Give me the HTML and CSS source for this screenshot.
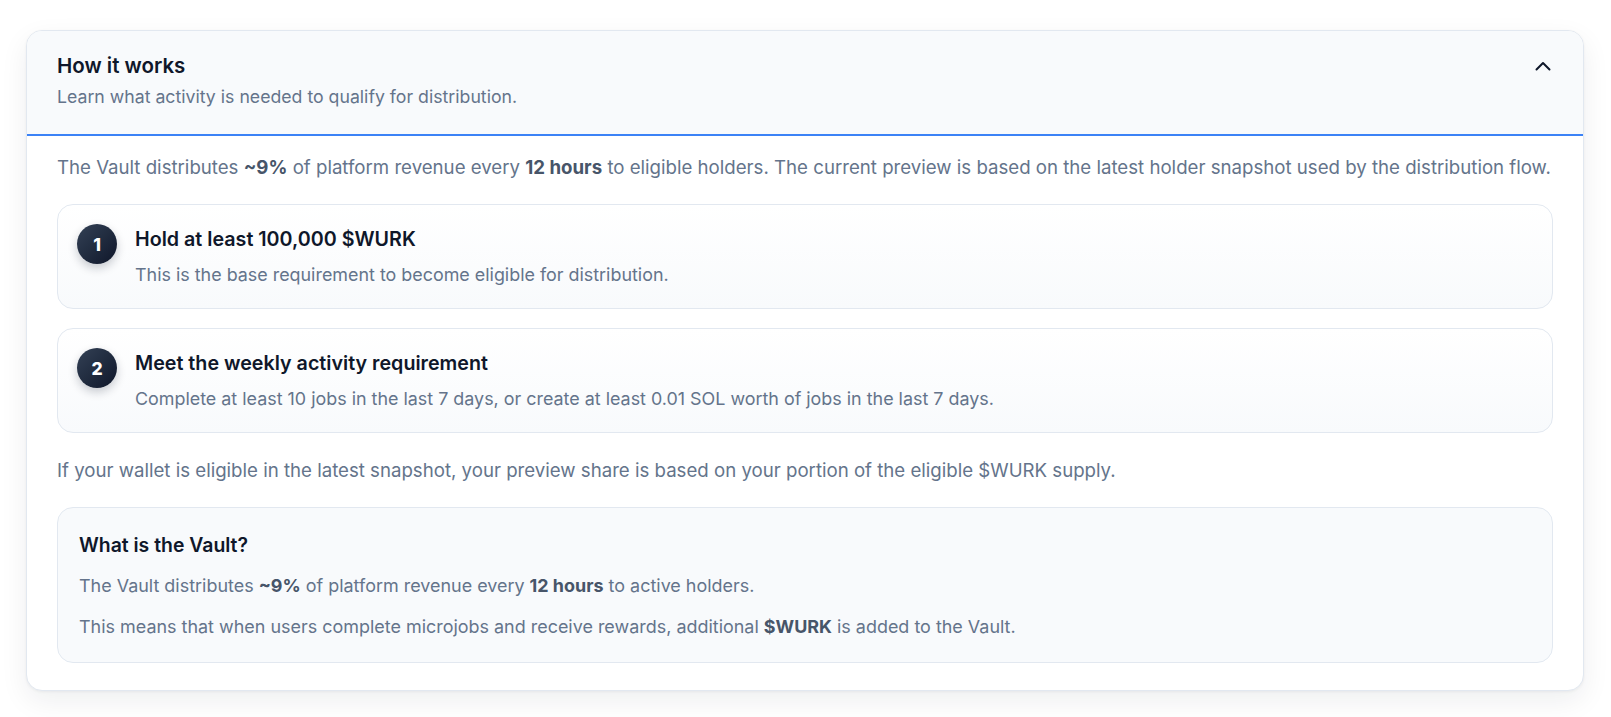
FILE: index.html
```html
<!DOCTYPE html>
<html lang="en">
<head>
  <meta charset="UTF-8" />
  <meta name="viewport" content="width=device-width, initial-scale=1.0" />
  <title>How it works - Vault</title>
  <link rel="stylesheet" href="styles.css">
</head>
<body>
  <section class="panel">
    <div class="panel-head">
      <div>
        <h2>How it works</h2>
        <p>Learn what activity is needed to qualify for distribution.</p>
      </div>
      <button class="toggle" aria-label="Collapse">
        <svg width="16" height="16" viewBox="0 0 16 16" fill="none" stroke="#0f172a" stroke-width="2" stroke-linecap="round" stroke-linejoin="round"><path d="M1.5 11.5 8 5l6.5 6.5"/></svg>
      </button>
    </div>

    <div class="panel-body">
      <p class="lead">The Vault distributes <b>~9%</b> of platform revenue every <b>12 hours</b> to eligible holders. The current preview is based on the latest holder snapshot used by the distribution flow.</p>

      <div class="steps">
        <div class="step">
          <span class="num">1</span>
          <div>
            <h3>Hold at least 100,000 $WURK</h3>
            <p>This is the base requirement to become eligible for distribution.</p>
          </div>
        </div>
        <div class="step">
          <span class="num">2</span>
          <div>
            <h3>Meet the weekly activity requirement</h3>
            <p>Complete at least 10 jobs in the last 7 days, or create at least 0.01 SOL worth of jobs in the last 7 days.</p>
          </div>
        </div>
      </div>

      <p class="lead">If your wallet is eligible in the latest snapshot, your preview share is based on your portion of the eligible $WURK supply.</p>

      <div class="vault">
        <h3>What is the Vault?</h3>
        <p>The Vault distributes <b>~9%</b> of platform revenue every <b>12 hours</b> to active holders.</p>
        <p>This means that when users complete microjobs and receive rewards, additional <b>$WURK</b> is added to the Vault.</p>
      </div>
    </div>
  </section>
</body>
</html>
```

FILE: styles.css
```css
* {
  box-sizing: border-box;
  margin: 0;
  padding: 0;
  font-family: 'Inter', 'Noto Sans', sans-serif;
}
body {
  background: #ffffff;
  padding: 30px 27px 28px 26px;
  color: #64748b;
}
.panel {
  background: #ffffff;
  border: 1px solid #e2e8f0;
  border-radius: 16px;
  overflow: hidden;
  box-shadow: 0 10px 28px rgba(15, 23, 42, 0.07), 0 1px 3px rgba(15, 23, 42, 0.05);
}
.panel-head {
  display: flex;
  justify-content: space-between;
  align-items: flex-start;
  background: #f8fafc;
  padding: 22px 30px 25px;
  border-bottom: 2px solid #3b82f6;
}
.panel-head h2 {
  font-size: 20.5px;
  line-height: 26px;
  font-weight: 600;
  color: #0f172a;
  margin-bottom: 6px;
}
.panel-head p {
  font-size: 17.7px;
  line-height: 24px;
}
.toggle {
  background: none;
  border: none;
  width: 24px;
  height: 26px;
  display: flex;
  align-items: center;
  justify-content: center;
  margin-right: -2px;
  cursor: pointer;
}
.panel-body {
  padding: 18px 30px 27px;
  display: flex;
  flex-direction: column;
  gap: 24px;
}
.lead {
  font-size: 18.65px;
  line-height: 26px;
}
b {
  font-weight: 700;
  color: #475569;
}
.steps {
  display: flex;
  flex-direction: column;
  gap: 19px;
}
.step {
  display: flex;
  align-items: flex-start;
  gap: 18px;
  padding: 19px 20px 20px 19px;
  border: 1px solid #e2e8f0;
  border-radius: 16px;
  background: linear-gradient(180deg, #ffffff, #f8fafc);
}
.num {
  flex: none;
  width: 40px;
  height: 40px;
  border-radius: 50%;
  display: flex;
  align-items: center;
  justify-content: center;
  background: linear-gradient(135deg, #334155, #0f172a);
  color: #ffffff;
  font-size: 17.5px;
  font-weight: 800;
  box-shadow: 0 4px 10px rgba(15, 23, 42, 0.22);
}
.step h3 {
  font-size: 19.7px;
  line-height: 26px;
  font-weight: 600;
  color: #0f172a;
  margin-top: 2px;
  margin-bottom: 10px;
}
.step p {
  font-size: 17.9px;
  line-height: 26px;
}
.vault {
  padding: 24px 21px 22px;
  border: 1px solid #e2e8f0;
  border-radius: 16px;
  background: #f8fafc;
}
.vault h3 {
  font-size: 19.4px;
  line-height: 26px;
  font-weight: 600;
  color: #0f172a;
  margin-bottom: 15px;
}
.vault p {
  font-size: 17.95px;
  line-height: 26px;
}
.vault p + p {
  margin-top: 15px;
}
```
